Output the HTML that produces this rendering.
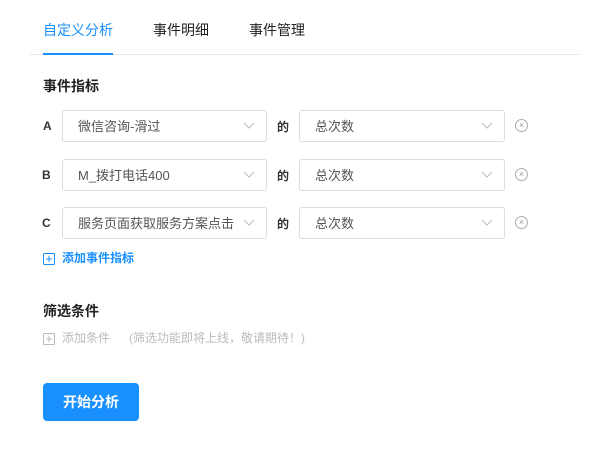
<!DOCTYPE html>
<html><head><meta charset="utf-8"><style>
*{margin:0;padding:0;box-sizing:border-box}
body{width:600px;height:450px;background:#fff;font-family:"Liberation Sans","Noto Sans CJK SC",sans-serif;position:relative;overflow:hidden;color:#222}
.a{position:absolute;white-space:nowrap}
.tab{font-size:14px;top:20px;line-height:20px}
.box{position:absolute;height:32px;border:1px solid #d9dce1;border-radius:3px;font-size:13px;color:#555;line-height:31px;padding-left:15px}
.box svg{position:absolute;right:11px;top:11px}
.lbl{font-size:12px;font-weight:bold;color:#333}
.x{position:absolute;width:13px;height:13px;border:1px solid #aaa;border-radius:50%;font-size:9px;color:#999;text-align:center;line-height:11px}
</style></head><body>
<div class="a tab" style="left:43px;color:#1890ff">自定义分析</div>
<div class="a tab" style="left:153px">事件明细</div>
<div class="a tab" style="left:249px">事件管理</div>
<div class="a" style="left:30px;top:54px;width:550px;height:1px;background:#e8e8e8"></div>
<div class="a" style="left:43px;top:53px;width:70px;height:2px;background:#1890ff"></div>
<div class="a" style="left:43px;top:76px;font-size:14px;font-weight:bold;line-height:20px">事件指标</div>

<div class="a lbl" style="left:43px;top:119px">A</div>
<div class="box" style="left:62px;top:110px;width:205px">微信咨询-滑过<svg width="12" height="8"><path d="M1 1L6 6L11 1" stroke="#bbb" fill="none"/></svg></div>
<div class="a lbl" style="left:277px;top:118px">的</div>
<div class="box" style="left:299px;top:110px;width:206px">总次数<svg width="12" height="8"><path d="M1 1L6 6L11 1" stroke="#bbb" fill="none"/></svg></div>
<div class="x" style="left:515px;top:119px">×</div>

<div class="a lbl" style="left:42px;top:168px">B</div>
<div class="box" style="left:62px;top:159px;width:205px">M_拨打电话400<svg width="12" height="8"><path d="M1 1L6 6L11 1" stroke="#bbb" fill="none"/></svg></div>
<div class="a lbl" style="left:277px;top:167px">的</div>
<div class="box" style="left:299px;top:159px;width:206px">总次数<svg width="12" height="8"><path d="M1 1L6 6L11 1" stroke="#bbb" fill="none"/></svg></div>
<div class="x" style="left:515px;top:168px">×</div>

<div class="a lbl" style="left:42px;top:216px">C</div>
<div class="box" style="left:62px;top:207px;width:205px">服务页面获取服务方案点击<svg width="12" height="8"><path d="M1 1L6 6L11 1" stroke="#bbb" fill="none"/></svg></div>
<div class="a lbl" style="left:277px;top:215px">的</div>
<div class="box" style="left:299px;top:207px;width:206px">总次数<svg width="12" height="8"><path d="M1 1L6 6L11 1" stroke="#bbb" fill="none"/></svg></div>
<div class="x" style="left:515px;top:216px">×</div>

<svg class="a" style="left:43px;top:253px" width="13" height="13"><rect x="0.5" y="0.5" width="11" height="11" fill="none" stroke="#1890ff" rx="1"/><path d="M3 6H9M6 3V9" stroke="#1890ff"/></svg>
<div class="a" style="left:62px;top:250px;font-size:12px;font-weight:bold;color:#1890ff;line-height:17px">添加事件指标</div>

<div class="a" style="left:43px;top:301px;font-size:14px;font-weight:bold;line-height:20px">筛选条件</div>
<svg class="a" style="left:43px;top:333px" width="13" height="13"><rect x="0.5" y="0.5" width="11" height="11" fill="none" stroke="#bbb" rx="1"/><path d="M3 6H9M6 3V9" stroke="#bbb"/></svg>
<div class="a" style="left:62px;top:330px;font-size:12px;color:#bbb;line-height:17px">添加条件</div>
<div class="a" style="left:129px;top:330px;font-size:12px;color:#bbb;line-height:17px">(筛选功能即将上线，敬请期待！)</div>

<div class="a" style="left:43px;top:383px;width:96px;height:38px;background:#1890ff;border-radius:4px;color:#fff;font-size:14px;font-weight:bold;text-align:center;line-height:38px">开始分析</div>
</body></html>
